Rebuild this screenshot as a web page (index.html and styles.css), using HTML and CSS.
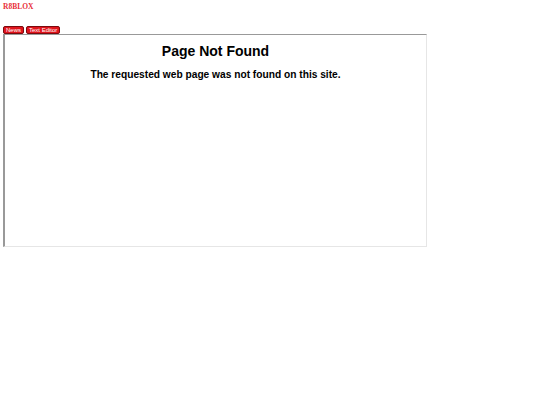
FILE: index.html
```
<!DOCTYPE html>
<html>
<head>
<meta charset="utf-8">
<link rel="stylesheet" href="styles.css">
</head>
<body>
<div class="logo">R8BLOX</div>
<div class="tabs">
  <span class="tab">News</span>
  <span class="tab">Text Editor</span>
</div>
<div class="frame">
  <h1 class="title">Page Not Found</h1>
  <p class="msg">The requested web page was not found on this site.</p>
</div>
</body>
</html>
```
FILE: styles.css
```
html, body {
  margin: 0;
  padding: 0;
  background: #fff;
}
body {
  padding: 3px 0 0 3px;
  font-family: "Liberation Sans", Arial, sans-serif;
}
.logo {
  font-family: "Liberation Serif", "Times New Roman", serif;
  font-weight: bold;
  font-size: 7.5px;
  line-height: 8px;
  color: #e8303a;
  height: 8px;
}
.tabs {
  display: flex;
  gap: 2px;
  margin-top: 15px;
  height: 8px;
}
.tab {
  display: flex;
  align-items: center;
  padding: 0 2px;
  height: 6px;
  background: #e0141c;
  border: 1px solid #7a0a0e;
  border-radius: 2px;
  color: #fff;
  font-size: 6px;
  line-height: 6px;
}
.frame {
  width: 421px;
  height: 211px;
  border-top: 1px solid #999;
  border-left: 2px solid #999;
  border-right: 1px solid #e6e6e6;
  border-bottom: 1px solid #e6e6e6;
  text-align: center;
}
.title {
  margin: 8px 0 0 0;
  font-size: 14px;
  line-height: 16px;
  font-weight: bold;
  color: #000;
}
.msg {
  margin: 10px 0 0 0;
  font-size: 10.2px;
  line-height: 12px;
  font-weight: bold;
  color: #000;
}
```
